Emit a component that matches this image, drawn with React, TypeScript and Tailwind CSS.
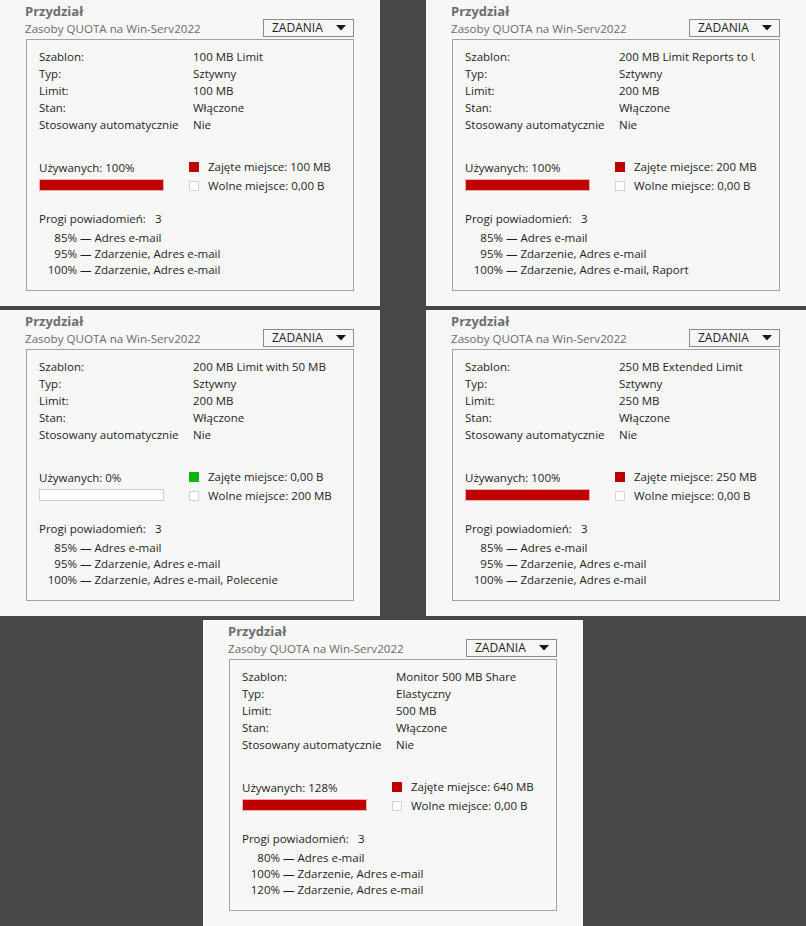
type Threshold = { pct: string; what: string };

type Quota = {
  template: string;
  type: string;
  limit: string;
  used: number;
  usedLabel: string;
  freeLabel: string;
  thresholds: Threshold[];
};

const quotas: Quota[] = [
  {
    template: "100 MB Limit",
    type: "Sztywny",
    limit: "100 MB",
    used: 100,
    usedLabel: "100 MB",
    freeLabel: "0,00 B",
    thresholds: [
      { pct: "85%", what: "Adres e-mail" },
      { pct: "95%", what: "Zdarzenie, Adres e-mail" },
      { pct: "100%", what: "Zdarzenie, Adres e-mail" },
    ],
  },
  {
    template: "200 MB Limit Reports to Users",
    type: "Sztywny",
    limit: "200 MB",
    used: 100,
    usedLabel: "200 MB",
    freeLabel: "0,00 B",
    thresholds: [
      { pct: "85%", what: "Adres e-mail" },
      { pct: "95%", what: "Zdarzenie, Adres e-mail" },
      { pct: "100%", what: "Zdarzenie, Adres e-mail, Raport" },
    ],
  },
  {
    template: "200 MB Limit with 50 MB",
    type: "Sztywny",
    limit: "200 MB",
    used: 0,
    usedLabel: "0,00 B",
    freeLabel: "200 MB",
    thresholds: [
      { pct: "85%", what: "Adres e-mail" },
      { pct: "95%", what: "Zdarzenie, Adres e-mail" },
      { pct: "100%", what: "Zdarzenie, Adres e-mail, Polecenie" },
    ],
  },
  {
    template: "250 MB Extended Limit",
    type: "Sztywny",
    limit: "250 MB",
    used: 100,
    usedLabel: "250 MB",
    freeLabel: "0,00 B",
    thresholds: [
      { pct: "85%", what: "Adres e-mail" },
      { pct: "95%", what: "Zdarzenie, Adres e-mail" },
      { pct: "100%", what: "Zdarzenie, Adres e-mail" },
    ],
  },
  {
    template: "Monitor 500 MB Share",
    type: "Elastyczny",
    limit: "500 MB",
    used: 128,
    usedLabel: "640 MB",
    freeLabel: "0,00 B",
    thresholds: [
      { pct: "80%", what: "Adres e-mail" },
      { pct: "100%", what: "Zdarzenie, Adres e-mail" },
      { pct: "120%", what: "Zdarzenie, Adres e-mail" },
    ],
  },
];

function QuotaPanel({ q }: { q: Quota }) {
  const details: [string, string][] = [
    ["Szablon:", q.template],
    ["Typ:", q.type],
    ["Limit:", q.limit],
    ["Stan:", "Włączone"],
    ["Stosowany automatycznie", "Nie"],
  ];
  const full = q.used > 0;

  return (
    <div className="w-[380px] h-[306px] bg-[#f7f7f7] pl-[25px] pt-[3px] text-[11.5px] text-[#1e1e1e]">
      <div className="text-[13px] font-bold leading-[16px] text-[#6e6e6e]">Przydział</div>
      <div className="flex items-end h-[18px] w-[329px]">
        <span className="flex-1 leading-[17px] text-[11.6px] text-[#6b6b6b]">
          Zasoby QUOTA na Win-Serv2022
        </span>
        <div className="w-[91px] h-[18px] border border-[#8c8c8c] flex items-center pl-[8px] pr-[7px]">
          <span className="flex-1 text-[12px] leading-none text-[#222]">ZADANIA</span>
          <svg width="10" height="6" viewBox="0 0 10 6">
            <polygon points="0,0 10,0 5,5.5" fill="#1a1a1a" />
          </svg>
        </div>
      </div>

      <div className="mt-[2px] ml-[1px] w-[328px] h-[252px] border border-[#a3a3a3] pl-[12px] pt-[8px]">
        <div className="flex flex-col">
          {details.map(([k, v]) => (
            <div key={k} className="flex h-[17px] leading-[17px]">
              <span className="w-[154px] shrink-0">{k}</span>
              <span className="w-[136px] overflow-hidden whitespace-nowrap">{v}</span>
            </div>
          ))}
        </div>

        <div className="flex mt-[26px]">
          <div className="w-[150px] shrink-0">
            <div className="leading-[17px] h-[17px]">Używanych: {q.used}%</div>
            <div
              className={
                full
                  ? "mt-[3px] w-[125px] h-[12px] border border-[#f0a8a8] bg-[#c00000]"
                  : "mt-[3px] w-[125px] h-[12px] border border-[#cfcfcf] bg-white"
              }
            />
          </div>
          <div className="flex flex-col -mt-[2px]">
            <div className="flex items-center h-[19px]">
              <span
                className={
                  full
                    ? "w-[10px] h-[10px] bg-[#c00000] mr-[9px]"
                    : "w-[10px] h-[10px] bg-[#0cb40c] mr-[9px]"
                }
              />
              <span>Zajęte miejsce: {q.usedLabel}</span>
            </div>
            <div className="flex items-center h-[19px]">
              <span className="w-[10px] h-[10px] bg-white border border-[#d4d4d4] mr-[9px]" />
              <span>Wolne miejsce: {q.freeLabel}</span>
            </div>
          </div>
        </div>

        <div className="mt-[15px] leading-[17px] h-[17px]">
          Progi powiadomień:<span className="ml-[9px]">{q.thresholds.length}</span>
        </div>
        <div className="mt-[3px] flex flex-col">
          {q.thresholds.map((t) => (
            <div key={t.pct} className="flex h-[16px] leading-[16px] whitespace-nowrap">
              <span className="w-[38px] text-right shrink-0">{t.pct}</span>
              <span className="ml-[3px]">— {t.what}</span>
            </div>
          ))}
        </div>
      </div>
    </div>
  );
}

export default function App() {
  return (
    <div
      className="w-[806px] h-[926px] bg-[#474747] flex flex-col gap-[4px] overflow-hidden"
      style={{ fontFamily: '"Open Sans", "Noto Sans", sans-serif' }}
    >
      <div className="flex justify-between">
        <QuotaPanel q={quotas[0]} />
        <QuotaPanel q={quotas[1]} />
      </div>
      <div className="flex justify-between">
        <QuotaPanel q={quotas[2]} />
        <QuotaPanel q={quotas[3]} />
      </div>
      <div className="flex pl-[203px]">
        <QuotaPanel q={quotas[4]} />
      </div>
    </div>
  );
}
